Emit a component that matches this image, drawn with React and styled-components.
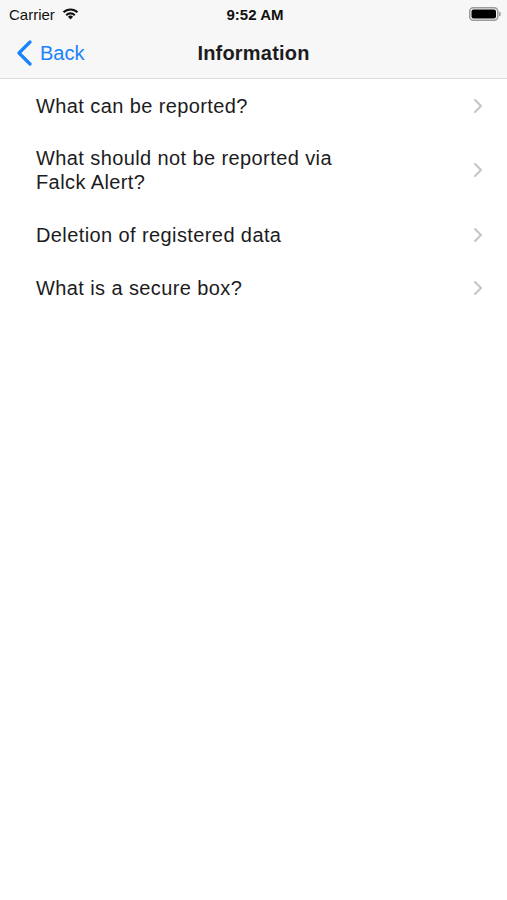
import React from 'react';
import styled, { createGlobalStyle } from 'styled-components';

const GlobalStyle = createGlobalStyle`
  body {
    margin: 0;
    background: #ffffff;
    font-family: "Liberation Sans", Arial, sans-serif;
  }
`;

const items = [
  'What can be reported?',
  'What should not be reported via\nFalck Alert?',
  'Deletion of registered data',
  'What is a secure box?',
];

const App = () => {
  return (
    <Screen>
      <GlobalStyle />
      <Header>
        <StatusBar>
          <Carrier>
            Carrier
            <svg width="17" height="13" viewBox="0 0 17 13">
              <path d="M8.5 12.5 L5.9 9.8 A3.7 3.7 0 0 1 11.1 9.8 Z" fill="#111" />
              <path d="M3.5 7.4 A7.1 7.1 0 0 1 13.5 7.4 L12 8.9 A5 5 0 0 0 5 8.9 Z" fill="#111" />
              <path d="M0.8 4.6 A10.9 10.9 0 0 1 16.2 4.6 L14.7 6.1 A8.8 8.8 0 0 0 2.3 6.1 Z" fill="#111" />
            </svg>
          </Carrier>
          <Clock>9:52 AM</Clock>
          <Battery>
            <svg width="32" height="14" viewBox="0 0 32 14">
              <rect x="0.75" y="0.75" width="28" height="12.5" rx="3.5" fill="none" stroke="#9a9a9a" strokeWidth="1.5" />
              <rect x="2.5" y="2.5" width="24.5" height="9" rx="2" fill="#000" />
              <rect x="30" y="4.8" width="1.6" height="4.4" rx="0.8" fill="#9a9a9a" />
            </svg>
          </Battery>
        </StatusBar>
        <NavBar>
          <BackButton>
            <svg width="17" height="26" viewBox="0 0 17 26">
              <path d="M14 2 L3 13 L14 24" fill="none" stroke="#1a82fb" strokeWidth="3.2" strokeLinecap="round" strokeLinejoin="round" />
            </svg>
            Back
          </BackButton>
          <Title>Information</Title>
        </NavBar>
      </Header>
      <List>
        {items.map((text) => (
          <Row key={text}>
            <RowText>{text}</RowText>
            <svg width="10" height="16" viewBox="0 0 10 16">
              <path d="M2 2 L8 8 L2 14" fill="none" stroke="#c4c4c9" strokeWidth="2" strokeLinecap="round" strokeLinejoin="round" />
            </svg>
          </Row>
        ))}
      </List>
    </Screen>
  );
};

const Screen = styled.div`
  width: 507px;
  height: 900px;
  background: #ffffff;
  color: #1c1c1e;
`;

const Header = styled.div`
  background: #f7f7f7;
  border-bottom: 1px solid #dcdcdc;
`;

const StatusBar = styled.div`
  height: 28px;
  display: grid;
  grid-template-columns: 1fr auto 1fr;
  align-items: center;
  padding: 0 6px 0 9px;
  font-size: 15px;
`;

const Carrier = styled.div`
  display: flex;
  align-items: center;
  gap: 7px;
  color: #111;
  svg {
    margin-top: -2px;
  }
`;

const Clock = styled.div`
  font-weight: 700;
  color: #111;
`;

const Battery = styled.div`
  display: flex;
  justify-content: flex-end;
`;

const NavBar = styled.div`
  height: 50px;
  display: grid;
  grid-template-columns: 1fr auto 1fr;
  align-items: center;
  padding: 0 16px;
`;

const BackButton = styled.div`
  display: flex;
  align-items: center;
  gap: 7px;
  font-size: 20px;
  color: #1a82fb;
`;

const Title = styled.div`
  font-size: 20px;
  font-weight: 700;
  letter-spacing: 0.2px;
  color: #1c1c1e;
`;

const List = styled.div`
  display: flex;
  flex-direction: column;
`;

const Row = styled.div`
  display: flex;
  align-items: center;
  justify-content: space-between;
  padding: 14px 24px 14px 36px;
  min-height: 25px;
`;

const RowText = styled.div`
  font-size: 20px;
  line-height: 24px;
  letter-spacing: 0.4px;
  white-space: pre-line;
  color: #1c1c1e;
`;

export default App;
